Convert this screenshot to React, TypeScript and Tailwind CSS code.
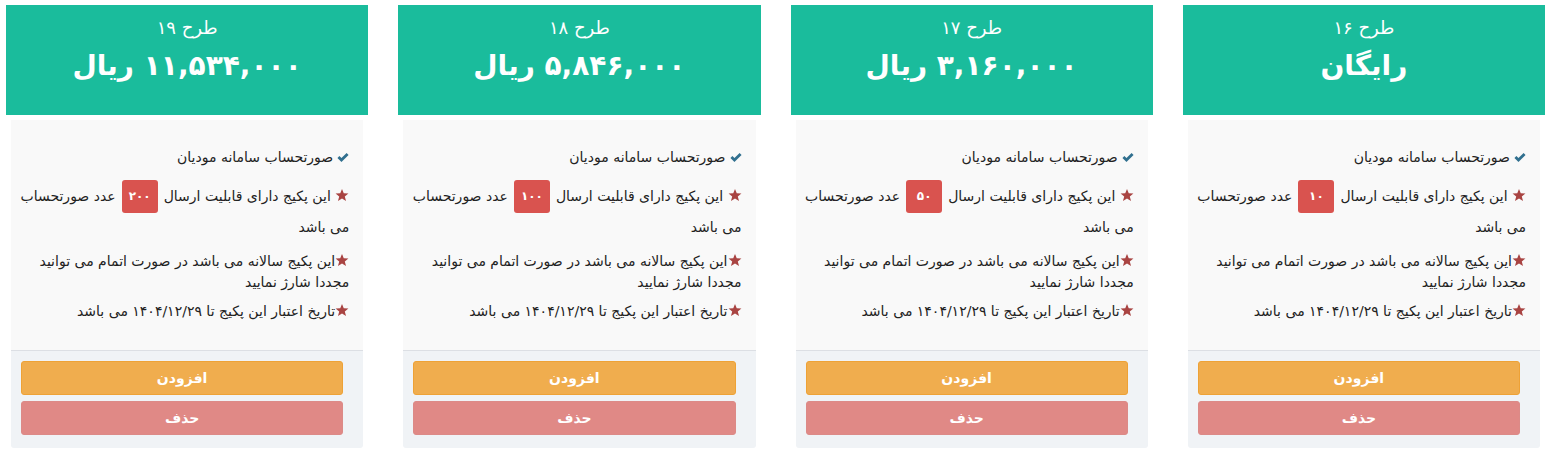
import React from "react";

type Plan = { title: string; price: string; count: string };

const plans: Plan[] = [
  { title: "طرح ۱۶", price: "رایگان", count: "۱۰" },
  { title: "طرح ۱۷", price: "۳,۱۶۰,۰۰۰ ریال", count: "۵۰" },
  { title: "طرح ۱۸", price: "۵,۸۴۶,۰۰۰ ریال", count: "۱۰۰" },
  { title: "طرح ۱۹", price: "۱۱,۵۳۴,۰۰۰ ریال", count: "۲۰۰" },
];

function Check() {
  return (
    <svg viewBox="0 0 14 12" className="inline-block w-[12px] h-[11px] align-[-1px] ml-[4px]">
      <path d="M0.5 6.5 L2.8 4.3 L5.2 6.7 L11.2 0.8 L13.5 3 L5.2 11.2 Z" fill="#31708f" />
    </svg>
  );
}

function Star() {
  return (
    <svg viewBox="0 0 24 24" className="inline-block w-[14px] h-[14px] align-[-1px]">
      <path d="M12 1.5 L15 8.8 L23 9.3 L16.8 14.4 L18.9 22.3 L12 17.9 L5.1 22.3 L7.2 14.4 L1 9.3 L9 8.8 Z" fill="#a94442" />
    </svg>
  );
}

function PlanCard({ plan }: { plan: Plan }) {
  return (
    <div className="flex flex-col">
      <div className="h-[110px] bg-[#1abc9c] text-white flex flex-col items-center pt-[9px]">
        <div className="text-[18px] leading-[28px]">{plan.title}</div>
        <div className="text-[28px] font-bold leading-[48px]">{plan.price}</div>
      </div>
      <div className="mx-[5px] mt-[5px] bg-[#f9f9f9] h-[230px] pr-[14px] pl-[2px] pt-[27px] text-[14px] text-[#222] leading-[21px]">
        <div>
          <Check />
          صورتحساب سامانه موديان
        </div>
        <div className="mt-[12px] leading-[29px]">
          <Star /> این پکیج دارای قابلیت ارسال
          <span className="inline-block align-middle mx-[6px] w-[36px] h-[33px] leading-[33px] rounded-[3px] bg-[#d9534f] text-white text-center text-[12px] font-bold">
            {plan.count}
          </span>
          عدد صورتحساب می باشد
        </div>
        <div className="mt-[9px] pl-[10px]">
          <Star />
          این پکیج سالانه می باشد در صورت اتمام می توانید مجددا شارژ نمایید
        </div>
        <div className="mt-[8px]">
          <Star />
          تاریخ اعتبار این پکیج تا ۱۴۰۴/۱۲/۲۹ می باشد
        </div>
      </div>
      <div className="mx-[5px] h-[98px] bg-[#f0f3f6] border-t border-[#dcdfe4] rounded-b-[3px] pr-[20px] pl-[10px] pt-[10px] flex flex-col gap-[6px]">
        <button className="h-[34px] rounded-[3px] bg-[#f0ad4e] border border-[#eea236] text-white text-[14px] font-bold">
          افزودن
        </button>
        <button className="h-[34px] rounded-[3px] bg-[#e08986] border border-[#dc8a87] text-white text-[14px] font-bold">
          حذف
        </button>
      </div>
    </div>
  );
}

export default function App() {
  return (
    <div
      dir="rtl"
      className="w-[1549px] h-[453px] bg-white pt-[5px] pl-[6px] pr-[4px] grid grid-cols-4 gap-x-[30px]"
      style={{ fontFamily: '"DejaVu Sans", "Noto Sans", sans-serif' }}
    >
      {plans.map((p) => (
        <PlanCard key={p.title} plan={p} />
      ))}
    </div>
  );
}
